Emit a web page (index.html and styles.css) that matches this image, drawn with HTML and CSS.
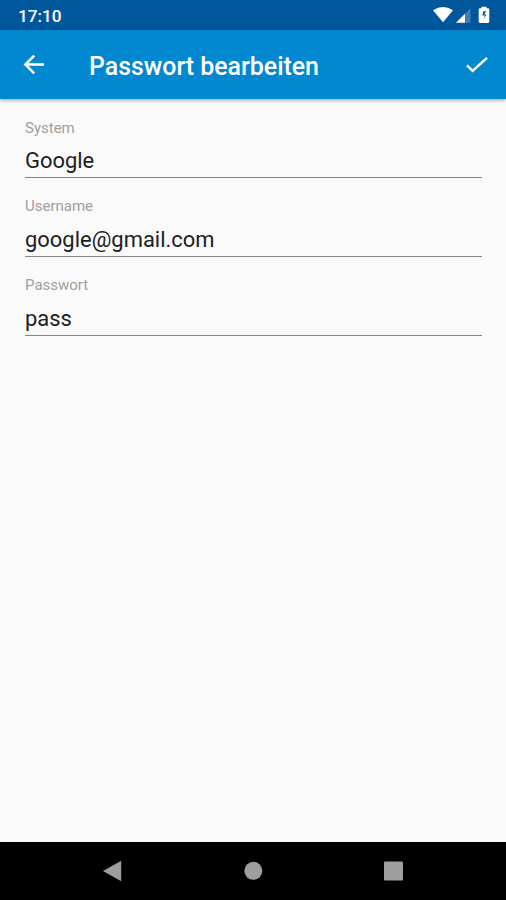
FILE: index.html
```html
<!DOCTYPE html>
<html lang="de">
<head>
<meta charset="utf-8">
<title>Passwort bearbeiten</title>
<link rel="stylesheet" href="styles.css">
</head>
<body>
<div class="screen">
  <header class="status">
    <span class="time">17:10</span>
    <svg class="indicators" width="60" height="20" viewBox="432 6 60 20">
      <path d="M433 10.3Q443 3.5 453 10.3L443 22.2Z" fill="#fff"/>
      <path d="M456 22.8L470.5 8.3V22.8Z" fill="#3f7fb5"/>
      <path d="M456 22.8L465 13.8V22.8Z" fill="#fff"/>
      <path d="M481.5 8.3V6.8h5v1.5h1.5q1.3 0 1.3 1.3v12q0 1.3-1.3 1.3h-8q-1.3 0-1.3-1.3v-12q0-1.3 1.3-1.3z" fill="#fff"/>
      <path d="M486.2 11.2h-2.9l-1 4.3h2.6L483 20l3.4-5.6h-2.3z" fill="#01579b"/>
    </svg>
  </header>
  <div class="appbar">
    <svg class="back" width="24" height="24" viewBox="0 0 24 24"><path d="M22 11.5H3.5M12.2 2.6L3.3 11.5l8.9 8.9"/></svg>
    <h1 class="title">Passwort bearbeiten</h1>
    <svg class="done" width="24" height="20" viewBox="0 0 24 20"><path d="M2 10.3l5.6 5.6L22 2.9"/></svg>
  </div>
  <main class="form">
    <div class="field"><span class="label">System</span><span class="value">Google</span></div>
    <div class="field"><span class="label">Username</span><span class="value">google@gmail.com</span></div>
    <div class="field"><span class="label">Passwort</span><span class="value">pass</span></div>
  </main>
  <nav class="navbar">
    <svg width="20" height="22" viewBox="0 0 20 22"><path d="M1 11L19.2 .8V21.2Z"/></svg>
    <svg width="20" height="20" viewBox="0 0 20 20"><circle cx="10.3" cy="9.8" r="9"/></svg>
    <svg width="20" height="20" viewBox="0 0 20 20"><rect x="0" y=".5" width="19" height="19" rx="1"/></svg>
  </nav>
</div>
</body>
</html>
```

FILE: styles.css
```css
body {
  margin: 0;
  font-family: Roboto, sans-serif;
}

.screen {
  display: flex;
  flex-direction: column;
  height: 900px;
  background: #fafafa;
}

.status {
  display: flex;
  align-items: center;
  justify-content: space-between;
  box-sizing: border-box;
  height: 30px;
  padding: 0 14px 0 18px;
  background: #01579b;
}

.time {
  padding-top: 2px;
  color: #fff;
  font-size: 17.2px;
  font-weight: 500;
}

.indicators {
  margin-top: 2px;
}

.appbar {
  display: flex;
  align-items: center;
  box-sizing: border-box;
  height: 69px;
  padding: 0 17px 0 22px;
  background: #0288d1;
  box-shadow: 0 1px 4px rgba(0, 0, 0, 0.4);
}

.back,
.done {
  fill: none;
  stroke: #fff;
  stroke-width: 2.5;
}

.title {
  flex: 1;
  margin: 3px 0 0 43px;
  color: #fff;
  font-size: 24.9px;
  font-weight: 500;
}

.form {
  flex: 1;
  padding: 0 24px 0 25px;
}

.field {
  display: flex;
  flex-direction: column;
  box-sizing: border-box;
  height: 79px;
  padding-top: 20px;
  border-bottom: 1px solid #858585;
}

.field + .field {
  padding-top: 19px;
}

.label {
  color: #a0a0a0;
  font-size: 15px;
  line-height: 18px;
}

.value {
  margin-top: 11px;
  color: #202020;
  font-size: 21.95px;
  line-height: 26px;
}

.field + .field .value {
  margin-top: 12px;
}

.navbar {
  display: flex;
  align-items: center;
  justify-content: space-between;
  box-sizing: border-box;
  height: 58px;
  padding: 0 102px;
  background: #000;
}

.navbar svg {
  fill: #9e9e9e;
}
```
